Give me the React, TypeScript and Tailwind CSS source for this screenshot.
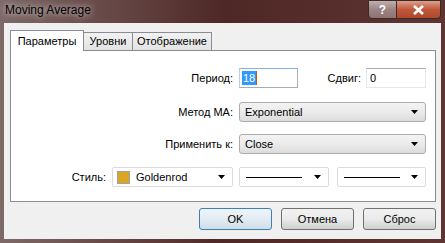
import React from "react";

const font = { fontFamily: '"Liberation Sans", Arial, sans-serif' };

function Arrow() {
  return (
    <svg width="7" height="4" viewBox="0 0 7 4" className="shrink-0">
      <path d="M0 0 H7 L3.5 4 Z" fill="#000" />
    </svg>
  );
}

function Combo({ text, className }: { text: string; className: string }) {
  return (
    <div
      className={`h-[20px] flex items-center pl-[5px] pr-[7px] rounded-[3px] border border-[#acacac] bg-gradient-to-b from-[#f3f3f3] via-[#ebebeb] to-[#dcdcdc] ${className}`}
    >
      <span className="flex-1 text-[11px] text-black leading-none">{text}</span>
      <Arrow />
    </div>
  );
}

function OwnerCombo({ children, className }: { children: React.ReactNode; className: string }) {
  return (
    <div className={`h-[20px] flex items-center pl-[4px] pr-[7px] rounded-[2px] border border-[#dcdcdc] bg-white ${className}`}>
      <div className="flex-1 flex items-center">{children}</div>
      <Arrow />
    </div>
  );
}

function Button({ label, def }: { label: string; def?: boolean }) {
  return (
    <div
      className={`w-[73px] h-[22px] flex items-center justify-center rounded-[3px] border text-[11px] text-black ${
        def
          ? "border-[#3c7fb1] bg-gradient-to-b from-[#eef4f9] via-[#e3ecf3] to-[#cfdce6]"
          : "border-[#707070] bg-gradient-to-b from-[#f2f2f2] via-[#ebebeb] to-[#cfcfcf]"
      }`}
    >
      {label}
    </div>
  );
}

export default function App() {
  return (
    <div
      style={font}
      className="w-[445px] h-[243px] flex flex-col bg-gradient-to-r from-[#7d6a68] via-[#4e2826] to-[#5e3532] overflow-hidden"
    >
      {/* title bar */}
      <div className="h-[23px] flex items-start relative">
        <span className="pl-[5px] pt-[4px] text-[12px] text-black leading-none [text-shadow:0_0_6px_rgba(255,255,255,0.9)]">
          Moving Average
        </span>
        <div className="ml-auto mr-[4px] flex">
          <div className="w-[29px] h-[19px] rounded-bl-[4px] border border-[#3a2a28] bg-gradient-to-b from-[#c2b0ae] via-[#9a8482] to-[#8c7472] flex items-center justify-center text-white text-[12px] font-bold leading-none">
            ?
          </div>
          <div className="w-[44px] h-[19px] rounded-br-[4px] border border-l-0 border-[#3a2a28] bg-gradient-to-b from-[#dba08a] via-[#c0573a] to-[#b0482c] flex items-center justify-center">
            <svg width="13" height="10" viewBox="0 0 13 10">
              <path d="M2 1 L11 9 M11 1 L2 9" stroke="#fff" strokeWidth="2.6" />
            </svg>
          </div>
        </div>
      </div>

      {/* client */}
      <div className="flex-1 mx-[4px] mb-[4px] bg-[#f0f0f0] flex flex-col px-[6px] pt-[7px]">
        {/* tabs */}
        <div className="flex items-end h-[20px] relative z-10">
          <div className="w-[74px] h-[21px] -mb-px border border-b-0 border-[#898c95] bg-white flex items-center justify-center text-[11px] text-black">
            Параметры
          </div>
          <div className="w-[49px] h-[18px] border border-l-0 border-b-0 border-[#898c95] bg-gradient-to-b from-[#f2f2f2] to-[#e3e3e3] flex items-center justify-center text-[11px] text-black">
            Уровни
          </div>
          <div className="w-[79px] h-[18px] border border-l-0 border-b-0 border-[#898c95] bg-gradient-to-b from-[#f2f2f2] to-[#e3e3e3] flex items-center justify-center text-[11px] text-black">
            Отображение
          </div>
        </div>

        {/* panel */}
        <div className="w-[426px] h-[152px] border border-[#898c95] bg-white flex flex-col pt-[17px] pr-[9px] text-[11px] text-black">
          <div className="flex items-center h-[20px]">
            <span className="w-[222px] text-right">Период:</span>
            <div className="ml-[6px] w-[59px] h-[20px] border border-[#abadb3] border-t-[#7eb4ea] border-l-[#b4d0ec] flex items-center pl-[2px]">
              <span className="bg-[#3399ff] text-white px-px leading-[14px]">18</span>
              <span className="w-px h-[14px] bg-[#c05a00]" />
            </div>
            <span className="ml-auto mr-[5px]">Сдвиг:</span>
            <div className="w-[60px] h-[20px] border border-[#e3e9ef] border-t-[#abadb3] flex items-center pl-[3px]">0</div>
          </div>

          <div className="flex items-center h-[20px] mt-[14px]">
            <span className="w-[222px] text-right">Метод МА:</span>
            <Combo text="Exponential" className="ml-[6px] flex-1" />
          </div>

          <div className="flex items-center h-[20px] mt-[12px]">
            <span className="w-[222px] text-right">Применить к:</span>
            <Combo text="Close" className="ml-[6px] flex-1" />
          </div>

          <div className="flex items-center h-[20px] mt-[13px] justify-end">
            <span className="mr-[6px]">Стиль:</span>
            <OwnerCombo className="w-[121px]">
              <span className="w-[13px] h-[13px] bg-[#daa520] border border-[#a0a0a0]" />
              <span className="ml-[6px]">Goldenrod</span>
            </OwnerCombo>
            <OwnerCombo className="w-[90px] ml-[6px] pl-[6px]">
              <span className="w-[56px] h-px bg-black" />
            </OwnerCombo>
            <OwnerCombo className="w-[89px] ml-[8px] pl-[6px]">
              <span className="w-[56px] h-px bg-black" />
            </OwnerCombo>
          </div>
        </div>

        {/* buttons */}
        <div className="flex justify-end gap-[9px] mt-[6px] w-[426px]">
          <Button label="OK" def />
          <Button label="Отмена" />
          <Button label="Сброс" />
        </div>
      </div>
    </div>
  );
}
